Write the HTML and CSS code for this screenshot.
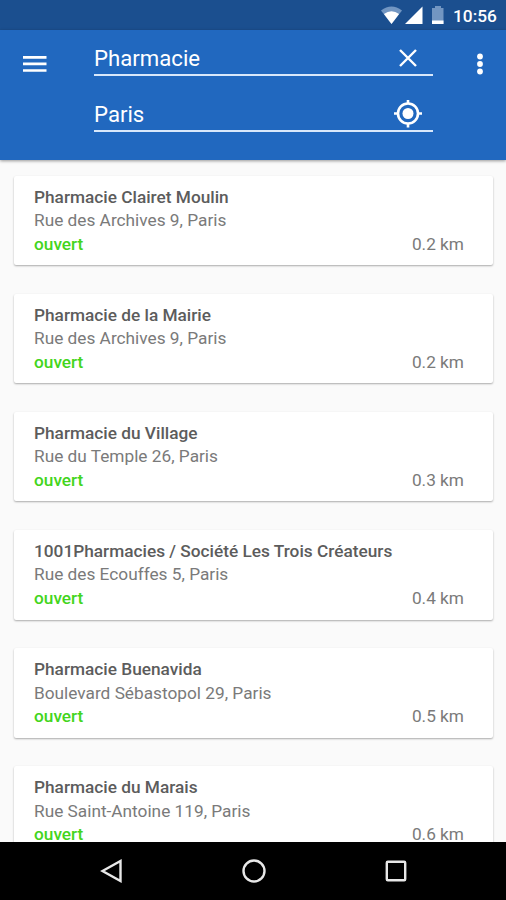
FILE: index.html
```html
<!DOCTYPE html>
<html lang="fr">
<head>
<meta charset="utf-8">
<title>Pharmacie</title>
<link rel="stylesheet" href="styles.css">
</head>
<body>
<div class="status">
  <svg class="status-icons" width="64" height="30" viewBox="0 0 64 30">
    <path d="M0 10.500Q10.500 2.500 21 10.500L10.500 24Z" fill="#7296c2"/>
    <path d="M2.900 14Q10.500 8.500 18.100 14L10.500 24Z" fill="#fff"/>
    <path d="M24 24L41.500 6.500V24Z" fill="#fff"/>
    <path d="M51 8h3V6h6v2h2.500v16H51Z" fill="#7296c2"/>
    <path d="M51 20.500h11.500V24H51Z" fill="#fff"/>
  </svg>
  <span class="time">10:56</span>
</div>
<header class="header">
  <svg class="menu" width="24" height="18" viewBox="0 0 24 18"><path d="M0 2.300h23.500M0 8.900h23.500M0 15.500h23.500" stroke="#fff" stroke-width="2.700"/></svg>
  <div class="fields">
    <div class="field"><span>Pharmacie</span>
      <svg width="28" height="28" viewBox="0 0 28 28"><path d="M6 6L22 22M22 6L6 22" stroke="#fff" stroke-width="2.400"/></svg>
    </div>
    <div class="field"><span>Paris</span>
      <svg width="28" height="28" viewBox="0 0 28 28" fill="none" stroke="#fff" stroke-width="2.600"><circle cx="14" cy="13.500" r="10"/><path d="M14 0v4M14 23.500v4M0 13.500h4M24 13.500h4"/><circle cx="14" cy="13.500" r="5.500" fill="#fff" stroke="none"/></svg>
    </div>
  </div>
  <svg class="more" width="6" height="22" viewBox="0 0 6 22" fill="#fff"><circle cx="3" cy="3.500" r="2.900"/><circle cx="3" cy="11" r="2.900"/><circle cx="3" cy="18.500" r="2.900"/></svg>
</header>
<main class="list">
  <article class="card"><h2>Pharmacie Clairet Moulin</h2><p>Rue des Archives 9, Paris</p><div class="info"><b>ouvert</b><span>0.2 km</span></div></article>
  <article class="card"><h2>Pharmacie de la Mairie</h2><p>Rue des Archives 9, Paris</p><div class="info"><b>ouvert</b><span>0.2 km</span></div></article>
  <article class="card"><h2>Pharmacie du Village</h2><p>Rue du Temple 26, Paris</p><div class="info"><b>ouvert</b><span>0.3 km</span></div></article>
  <article class="card"><h2>1001Pharmacies / Société Les Trois Créateurs</h2><p>Rue des Ecouffes 5, Paris</p><div class="info"><b>ouvert</b><span>0.4 km</span></div></article>
  <article class="card"><h2>Pharmacie Buenavida</h2><p>Boulevard Sébastopol 29, Paris</p><div class="info"><b>ouvert</b><span>0.5 km</span></div></article>
  <article class="card"><h2>Pharmacie du Marais</h2><p>Rue Saint-Antoine 119, Paris</p><div class="info"><b>ouvert</b><span>0.6 km</span></div></article>
</main>
<nav class="nav">
  <svg width="24" height="24" viewBox="0 0 24 24"><path d="M2.500 12L20.500 2V22Z"/></svg>
  <svg width="24" height="24" viewBox="0 0 24 24"><circle cx="12" cy="12" r="10.500"/></svg>
  <svg width="24" height="24" viewBox="0 0 24 24"><rect x="2.800" y="2.800" width="18.400" height="18.400" rx="1"/></svg>
</nav>
</body>
</html>
```
FILE: styles.css
```css
* { box-sizing: border-box; }
body {
  margin: 0;
  height: 900px;
  display: flex;
  flex-direction: column;
  overflow: hidden;
  background: #fafafa;
  font-family: Roboto, sans-serif;
}
.status {
  flex: 0 0 30px;
  display: flex;
  align-items: center;
  justify-content: flex-end;
  padding-right: 9px;
  background: #1b4f8f;
  color: #fff;
}
.status-icons { margin-right: 8px; }
.time { width: 44px; font-size: 17.3px; font-weight: 500; line-height: 28px; padding-top: 2px; white-space: nowrap; }
.header {
  flex: 0 0 130px;
  display: flex;
  align-items: flex-start;
  padding: 12px 23px 0;
  background: #2168bf;
  box-shadow: 0 1px 3px rgba(0, 0, 0, .4);
  z-index: 1;
}
.menu { margin-top: 13px; }
.fields { width: 339px; margin-left: 47px; }
.field {
  display: flex;
  align-items: center;
  justify-content: space-between;
  height: 34px;
  padding-right: 11px;
  border-bottom: 2px solid #d8e8fb;
  color: #fff;
  font-size: 22.2px;
}
.field + .field { margin-top: 22px; }
.more { margin: 11px 0 0 44px; }
.list {
  flex: 1;
  min-height: 0;
  overflow: hidden;
  display: flex;
  flex-direction: column;
  gap: 28.6px;
  padding: 15.800px 13px 0 14px;
}
.card {
  flex: 0 0 89.500px;
  padding: 10px 29px 0 20px;
  background: #fff;
  border-radius: 2px;
  box-shadow: 0 1px 2px rgba(0, 0, 0, .32);
  font-size: 17.25px;
  line-height: 23.4px;
  color: #7a7a7a;
}
.card h2 { margin: 0; font-size: 17.25px; font-weight: 500; color: #5c5c5c; white-space: nowrap; }
.card p { margin: 0; }
.info { display: flex; justify-content: space-between; }
.info b { font-weight: 500; color: #43d51c; }
.nav {
  flex: 0 0 58px;
  display: flex;
  align-items: center;
  justify-content: center;
  gap: 118px;
  padding-left: 2px;
  background: #000;
}
.nav svg { fill: none; stroke: #e8e8e8; stroke-width: 2.4; }
```
